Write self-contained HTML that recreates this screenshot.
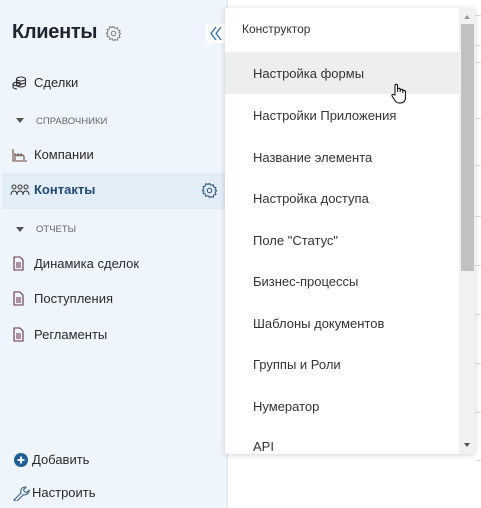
<!DOCTYPE html><html><head><meta charset="utf-8"><style>
*{margin:0;padding:0;box-sizing:border-box}
body{width:481px;height:508px;overflow:hidden;background:#fff;font-family:"Liberation Sans",sans-serif;position:relative;color:#222}
.sb{position:absolute;left:0;top:0;width:228px;height:508px;background:#eff5fc;border-right:1px solid #dfe3e8}
.t{position:absolute;white-space:nowrap}
.it{font-size:13px;color:#2a2a2a}
.ic{position:absolute}
.dd{position:absolute;left:225px;top:8px;width:250px;height:446px;background:#fff;box-shadow:0 1px 6px rgba(0,0,0,.18);border-radius:3px;overflow:hidden}
.dd .r{position:absolute;left:28px;font-size:13px;color:#333}
.ln{position:absolute;left:475px;width:6px;height:1px;background:#ddd}
</style></head><body>
<div class="ln" style="top:15px"></div><div class="ln" style="top:45px"></div><div class="ln" style="top:62px"></div><div class="ln" style="top:118px"></div><div class="ln" style="top:165px"></div><div class="ln" style="top:216px"></div><div class="ln" style="top:265px"></div><div class="ln" style="top:314px"></div><div class="ln" style="top:363px"></div><div class="ln" style="top:412px"></div><div class="ln" style="top:460px"></div>
<div class="sb">
<div class="t" style="left:12px;top:21px;font-size:20px;font-weight:bold;color:#1c2530;letter-spacing:-0.3px">Клиенты</div>
<svg class="ic" style="left:105px;top:25px" width="17" height="17" viewBox="0 0 24 24" fill="none" stroke="#888" stroke-width="1.6"><circle cx="12" cy="12" r="3.2"/><path d="M12 2l2 2.6 3.2-.8.8 3.2L21 8l-1 3 2 1-2 2.4 1 3-3 .9-.8 3.2-3.2-.8L12 22l-2-2.6-3.2.8-.8-3.2L3 16l1-3-2-1 2-2.4-1-3 3-.9.8-3.2 3.2.8z"/></svg>
<div style="position:absolute;left:206px;top:24px;width:20px;height:19px;background:#fff"></div>
<svg class="ic" style="left:209px;top:26px" width="14" height="15" viewBox="0 0 14 15" fill="none" stroke="#2a6db5" stroke-width="1.3"><path d="M7 1L2 7.5 7 14M12 1L7 7.5 12 14"/></svg>
<svg class="ic" style="left:12px;top:76px" width="15" height="14" viewBox="0 0 15 14" fill="none" stroke="#333" stroke-width="1.1"><ellipse cx="9" cy="3" rx="4.5" ry="2"/><path d="M4.5 3v6c0 1 2 2 4.5 2s4.5-1 4.5-2V3M4.5 6c0 1 2 2 4.5 2s4.5-1 4.5-2"/><ellipse cx="5" cy="8" rx="4" ry="1.8"/><path d="M1 8v3c0 1 2 2 4 2"/></svg>
<div class="t it" style="left:34px;top:75px">Сделки</div>
<div class="t" style="left:16px;top:118px;width:0;height:0;border-left:4.5px solid transparent;border-right:4.5px solid transparent;border-top:5px solid #555"></div>
<div class="t" style="left:36px;top:116px;font-size:9.5px;color:#666">СПРАВОЧНИКИ</div>
<svg class="ic" style="left:12px;top:148px" width="16" height="14" viewBox="0 0 16 14" fill="none" stroke="#6b4a3a" stroke-width="1.1"><path d="M1 1v12h14M3 12V6l3 2V6l3 2V6l3 2v4"/></svg>
<div class="t it" style="left:34px;top:147px">Компании</div>
<div style="position:absolute;left:2px;top:173px;width:224px;height:36px;background:#e3edf7"></div>
<svg class="ic" style="left:10px;top:184px" width="20" height="12" viewBox="0 0 20 12" fill="none" stroke="#333" stroke-width="1"><circle cx="4" cy="3" r="2"/><circle cx="10" cy="3" r="2"/><circle cx="16" cy="3" r="2"/><path d="M1 11c0-3 1.5-4 3-4s3 1 3 4M7 11c0-3 1.5-4 3-4s3 1 3 4M13 11c0-3 1.5-4 3-4s3 1 3 4"/></svg>
<div class="t it" style="left:34px;top:182px;font-weight:bold;color:#234a72">Контакты</div>
<svg class="ic" style="left:201px;top:182px" width="17" height="17" viewBox="0 0 24 24" fill="none" stroke="#3b5f86" stroke-width="1.6"><circle cx="12" cy="12" r="3.2"/><path d="M12 2l2 2.6 3.2-.8.8 3.2L21 8l-1 3 2 1-2 2.4 1 3-3 .9-.8 3.2-3.2-.8L12 22l-2-2.6-3.2.8-.8-3.2L3 16l1-3-2-1 2-2.4-1-3 3-.9.8-3.2 3.2.8z"/></svg>
<div class="t" style="left:16px;top:227px;width:0;height:0;border-left:4.5px solid transparent;border-right:4.5px solid transparent;border-top:5px solid #555"></div>
<div class="t" style="left:36px;top:224px;font-size:9.5px;color:#666">ОТЧЕТЫ</div>
<svg class="ic" style="left:13px;top:256px" width="11" height="15" viewBox="0 0 11 15" fill="none" stroke="#6b3040" stroke-width="1.1"><path d="M1 1h6l3 3v10H1z M3 7h5M3 9h5M3 11h5"/></svg>
<div class="t it" style="left:34px;top:256px">Динамика сделок</div>
<svg class="ic" style="left:13px;top:291px" width="11" height="15" viewBox="0 0 11 15" fill="none" stroke="#6b3040" stroke-width="1.1"><path d="M1 1h6l3 3v10H1z M3 7h5M3 9h5M3 11h5"/></svg>
<div class="t it" style="left:34px;top:291px">Поступления</div>
<svg class="ic" style="left:13px;top:327px" width="11" height="15" viewBox="0 0 11 15" fill="none" stroke="#6b3040" stroke-width="1.1"><path d="M1 1h6l3 3v10H1z M3 7h5M3 9h5M3 11h5"/></svg>
<div class="t it" style="left:34px;top:327px">Регламенты</div>
<svg class="ic" style="left:14px;top:453px" width="14" height="14" viewBox="0 0 14 14"><circle cx="7" cy="7" r="7" fill="#1f5f95"/><path d="M7 3.5v7M3.5 7h7" stroke="#fff" stroke-width="1.8"/></svg>
<div class="t it" style="left:32px;top:452px">Добавить</div>
<svg class="ic" style="left:13px;top:484px" width="17" height="17" viewBox="0 0 17 17" fill="none" stroke="#3b5f86" stroke-width="1.1"><path d="M1 16l7-7c-1-3 1-6 4-6l1 .2-2.5 2.5 1 2 2 1L16 6.2c.3 3-2.5 5.3-5.5 4.5L3.5 17.5z"/></svg>
<div class="t it" style="left:32px;top:485px">Настроить</div>
</div>
<div class="dd">
<div class="t" style="left:17px;top:14px;font-size:12px;color:#333">Конструктор</div>
<div style="position:absolute;left:0;top:44px;width:234px;height:42px;background:#eeeeee"></div>
<div class="t r" style="top:58px">Настройка формы</div>
<div class="t r" style="top:100px">Настройки Приложения</div>
<div class="t r" style="top:142px">Название элемента</div>
<div class="t r" style="top:183px">Настройка доступа</div>
<div class="t r" style="top:225px">Поле "Статус"</div>
<div class="t r" style="top:266px">Бизнес-процессы</div>
<div class="t r" style="top:308px">Шаблоны документов</div>
<div class="t r" style="top:349px">Группы и Роли</div>
<div class="t r" style="top:391px">Нумератор</div>
<div class="t r" style="top:431px">API</div>
<div style="position:absolute;left:234px;top:0;width:16px;height:446px;background:#f1f1f1"></div>
<div style="position:absolute;left:236px;top:16px;width:13px;height:247px;background:#c1c1c1"></div>
<div class="t" style="left:239px;top:7px;border-left:3.5px solid transparent;border-right:3.5px solid transparent;border-bottom:4px solid #999;width:0;height:0"></div>
<div class="t" style="left:239px;top:435px;border-left:3.5px solid transparent;border-right:3.5px solid transparent;border-top:4px solid #555;width:0;height:0"></div>
</div>
<svg class="ic" style="left:390px;top:83px" width="18" height="22" viewBox="0 0 18 22" fill="#fff" stroke="#000" stroke-width="1"><path d="M5 12V2.5a1.3 1.3 0 0 1 2.6 0V9V6.5a1.3 1.3 0 0 1 2.6 0V9V7.5a1.3 1.3 0 0 1 2.6 0V10V8.5a1.3 1.3 0 0 1 2.6 0V15c0 3-2 5-5 5H9c-2 0-3-1-4-2.5L2 13c-.6-1 .6-2 1.5-1.3z"/></svg>
</body></html>
